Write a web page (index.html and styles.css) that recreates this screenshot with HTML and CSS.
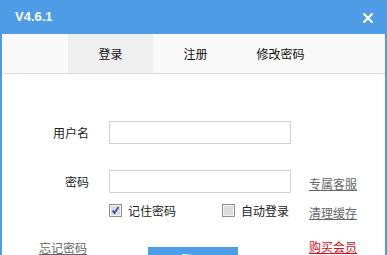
FILE: index.html
```html
<!DOCTYPE html>
<html>
<head>
<meta charset="utf-8">
<link rel="stylesheet" href="styles.css">
</head>
<body>
<div class="window">
  <div class="titlebar">
    <span class="version">V4.6.1</span>
    <svg class="close" width="10" height="10" viewBox="0 0 10 10"><path d="M1 1L9 9M9 1L1 9" stroke="#fff" stroke-width="2.2" stroke-linecap="square"/></svg>
  </div>
  <div class="body">
    <div class="tabs">
      <div class="tab active">登录</div>
      <div class="tab">注册</div>
      <div class="tab">修改密码</div>
    </div>
    <div class="form">
      <div class="row r1">
        <label class="lbl">用户名</label>
        <div class="input"></div>
      </div>
      <div class="row r2">
        <label class="lbl">密码</label>
        <div class="input"></div>
        <a class="link">专属客服</a>
      </div>
      <div class="row r3">
        <div class="checks">
          <span class="check"><svg class="box" width="13" height="13" viewBox="0 0 13 13"><rect x="0.5" y="0.5" width="12" height="12" fill="#e8e8e8" stroke="#8e8e8e"/><rect x="1.5" y="1.5" width="10" height="10" fill="#dcdcdc" stroke="#f4f4f4"/><path d="M3.5 6.5L5.5 9L9.5 3" stroke="#3a4f9c" stroke-width="1.8" fill="none"/></svg>记住密码</span>
          <span class="check"><svg class="box" width="13" height="13" viewBox="0 0 13 13"><rect x="0.5" y="0.5" width="12" height="12" fill="#e8e8e8" stroke="#8e8e8e"/><rect x="1.5" y="1.5" width="10" height="10" fill="#dcdcdc" stroke="#f4f4f4"/></svg>自动登录</span>
        </div>
        <a class="link">清理缓存</a>
      </div>
      <div class="row r4">
        <a class="link forgot">忘记密码</a>
        <button class="login">登录</button>
        <a class="link red">购买会员</a>
      </div>
    </div>
  </div>
</div>
</body>
</html>
```
FILE: styles.css
```css
html, body {
  margin: 0;
  padding: 0;
  height: 100%;
  overflow: hidden;
}
body {
  background: #4e9be6;
  font-family: "Noto Sans CJK SC", "Microsoft YaHei", sans-serif;
  font-size: 12px;
  color: #222;
}
.window {
  width: 387px;
  height: 255px;
  display: flex;
  flex-direction: column;
  overflow: hidden;
}
.titlebar {
  height: 34px;
  flex: none;
  display: flex;
  align-items: center;
  justify-content: space-between;
  padding: 0 14px 0 15px;
  box-sizing: border-box;
}
.version {
  font-family: "Liberation Sans", Arial, sans-serif;
  font-weight: bold;
  font-size: 13px;
  color: #fff;
  margin-top: -2px;
}
.close {
  display: block;
  margin-top: 2px;
}
.body {
  flex: 1;
  margin: 0 2px;
  background: #fff;
  overflow: hidden;
}
.tabs {
  height: 39px;
  background: #f9f9f9;
  border-bottom: 1px solid #dadada;
  display: flex;
  padding-left: 66px;
}
.tab {
  width: 85px;
  display: flex;
  align-items: center;
  justify-content: center;
  line-height: 12px;
  color: #111;
}
.tab.active {
  background: #efefef;
}
.form {
  padding-top: 47px;
  display: flex;
  flex-direction: column;
}
.row {
  display: flex;
  align-items: center;
}
.lbl {
  width: 87px;
  text-align: right;
  margin-right: 20px;
  line-height: 12px;
}
.input {
  width: 180px;
  height: 21px;
  border: 1px solid #d2d2d2;
  margin-right: 18px;
}
.r2 {
  margin-top: 26px;
}
.r2 .link {
  align-self: flex-start;
  margin-top: 8px;
}
.r3 {
  margin-top: 11px;
  padding-left: 107px;
  align-items: flex-start;
}
.r3 .link {
  margin-top: 3px;
}
.checks {
  width: 182px;
  margin-right: 18px;
  display: flex;
}
.check {
  display: flex;
  align-items: center;
  line-height: 12px;
}
.check:first-child {
  width: 113px;
}
.box {
  display: block;
  margin-right: 6px;
}
.link {
  color: #666;
  text-decoration: underline;
  line-height: 12px;
}
.link.red {
  color: #d7111c;
}
.r4 {
  margin-top: 22px;
  align-items: flex-start;
}
.forgot {
  margin-left: 37px;
  margin-top: 1px;
}
.login {
  margin-left: 61px;
  margin-right: 71px;
  width: 90px;
  height: 26px;
  margin-top: 6px;
  border: none;
  background: #4d9de8;
  color: #fff;
  font-family: inherit;
  font-size: 12px;
  line-height: 12px;
  padding: 0;
}
```
